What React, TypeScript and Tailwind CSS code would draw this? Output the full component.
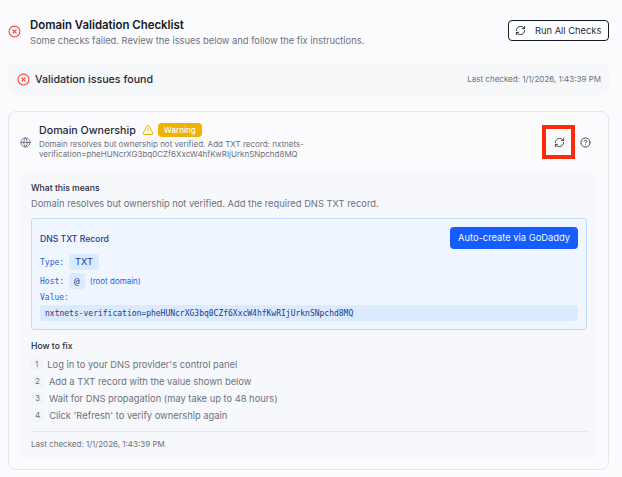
import { AlertTriangle, CircleHelp, CircleX, Globe, RefreshCw } from 'lucide-react';

const steps = [
  "Log in to your DNS provider's control panel",
  'Add a TXT record with the value shown below',
  'Wait for DNS propagation (may take up to 48 hours)',
  "Click 'Refresh' to verify ownership again",
];

const TXT_VALUE = 'nxtnets-verification=pheHUNcrXG3bq0CZf6XxcW4hfKwRIjUrknSNpchd8MQ';

export default function App() {
  return (
    <div className="h-[477px] w-[622px] overflow-hidden bg-[#fbfbfd] pt-[17px] pr-[13px] pl-2 font-['Inter',sans-serif] text-[#111827]">
      {/* Header */}
      <div className="flex items-start justify-between">
        <div className="flex items-center gap-[9px]">
          <CircleX className="mb-[3px] h-[13px] w-[13px] text-[#ef4444]" strokeWidth={2} />
          <div>
            <h1 className="text-[11.4px] leading-[16px] font-semibold">Domain Validation Checklist</h1>
            <p className="mt-px text-[9.33px] leading-[14px] text-[#6b7280]">
              Some checks failed. Review the issues below and follow the fix instructions.
            </p>
          </div>
        </div>
        <button className="mt-[3px] flex h-[21px] w-[101px] items-center gap-[9px] rounded-[4px] border border-[#111827] bg-white pl-[6px] text-[9.33px] text-[#1f2937]">
          <RefreshCw className="h-[11px] w-[11px]" />
          Run All Checks
        </button>
      </div>

      {/* Status banner */}
      <div className="mt-[15px] flex h-[32px] items-center justify-between rounded-lg bg-[#f6f7f9] pr-2 pl-[9px]">
        <div className="flex items-center gap-[5px]">
          <CircleX className="h-[13px] w-[13px] text-[#ef4444]" strokeWidth={2} />
          <span className="pt-px text-[10.67px] font-medium text-[#1f2937]">Validation issues found</span>
        </div>
        <span className="text-[8px] text-[#6b7280]">Last checked: 1/1/2026, 1:43:39 PM</span>
      </div>

      {/* Check card */}
      <div className="mt-4 h-[359px] rounded-lg border border-[#e2e8f0] bg-[#fbfbfd] px-[11px]">
        <div className="flex h-[60px] items-center">
          <Globe className="h-[11px] w-[11px] shrink-0 text-[#6b7280]" />
          <div className="mb-[2px] ml-[8px] flex-1">
            <div className="flex items-start">
              <span className="pt-px text-[10.67px] leading-[14px] font-medium text-[#1f2937]">Domain Ownership</span>
              <AlertTriangle className="mt-px ml-[6px] h-[12px] w-[12px] text-[#f0b100]" />
              <span className="ml-[4px] rounded-[4px] bg-[#f0b100] px-[6px] text-[8px] leading-[14px] font-medium text-white">
                Warning
              </span>
            </div>
            <p className="mt-px w-[300px] text-[8px] leading-[10px] text-[#6b7280]">
              Domain resolves but ownership not verified. Add TXT record: nxtnets-verification=pheHUNcrXG3bq0CZf6XxcW4hfKwRIjUrknSNpchd8MQ
            </p>
          </div>
          <div className="relative flex h-[34px] w-[33px] items-center justify-center">
            <RefreshCw className="ml-px h-[11px] w-[11px] text-[#374151]" />
            <div className="absolute inset-0 border-4 border-[#ff2a0a]" />
          </div>
          <CircleHelp className="mr-[6px] ml-[5px] h-[11px] w-[11px] text-[#374151]" />
        </div>

        <div className="rounded-lg bg-[#f7f8fb] pt-2 pr-[10px] pb-2 pl-[11px]">
          <h3 className="text-[8.6px] leading-[16px] font-medium text-[#1f2937]">What this means</h3>
          <p className="mt-px text-[9.33px] leading-[14px] text-[#6b7280]">
            Domain resolves but ownership not verified. Add the required DNS TXT record.
          </p>

          <div className="mt-[7px] rounded-[3px] border border-[#bfdbfe] bg-[#eff6ff] p-2">
            <div className="flex items-center justify-between">
              <span className="pt-[2px] text-[8.6px] font-medium text-[#1e3a8a]">DNS TXT Record</span>
              <button className="h-[22px] w-[128px] rounded-[4px] bg-[#155dfc] text-[9.33px] text-[#eff6ff]">
                Auto-create via GoDaddy
              </button>
            </div>
            <div className="mt-[5px] flex h-[16px] items-center gap-[5px] font-['DejaVu_Sans_Mono',monospace] text-[8px] text-[#2b5fd9]">
              <span className="pt-px">Type:</span>
              <span className="rounded-[3px] bg-[#dbeafe] px-[6px] font-['Inter',sans-serif] text-[9.33px] leading-[16px] text-[#1e3a8a]">TXT</span>
            </div>
            <div className="mt-[3px] flex h-[16px] items-center gap-[5px] font-['DejaVu_Sans_Mono',monospace] text-[8px] text-[#2b5fd9]">
              <span className="pt-px">Host:</span>
              <span className="rounded-[3px] bg-[#dbeafe] px-[5px] text-[9.33px] leading-[16px] text-[#1e3a8a]">@</span>
              <span className="font-['Inter',sans-serif] text-[8px] text-[#2563eb]">(root domain)</span>
            </div>
            <div className="mt-[2px] font-['DejaVu_Sans_Mono',monospace] text-[8px] leading-[14px] text-[#2b5fd9]">Value:</div>
            <div className="h-[16px] rounded-[3px] bg-[#dbeafe] px-[5px] font-['DejaVu_Sans_Mono',monospace] text-[8px] leading-[18px] text-[#1e3a8a]">
              {TXT_VALUE}
            </div>
          </div>

          <h3 className="mt-2 text-[8.6px] leading-[16px] font-medium text-[#1f2937]">How to fix</h3>
          <ol className="mt-[4px] flex flex-col gap-[4px]">
            {steps.map((step, i) => (
              <li key={step} className="flex items-center gap-[5px] text-[9.33px] leading-[13px] text-[#6b7280]">
                <span className="rounded-[3px] bg-[#f1f5f9] px-[4px] text-[8px]">{i + 1}</span>
                {step}
              </li>
            ))}
          </ol>
          <div className="mt-[9px] border-t border-[#e5e7eb] pt-[6px] text-[8px] leading-[12px] text-[#6b7280]">
            Last checked: 1/1/2026, 1:43:39 PM
          </div>
        </div>
      </div>
    </div>
  );
}
